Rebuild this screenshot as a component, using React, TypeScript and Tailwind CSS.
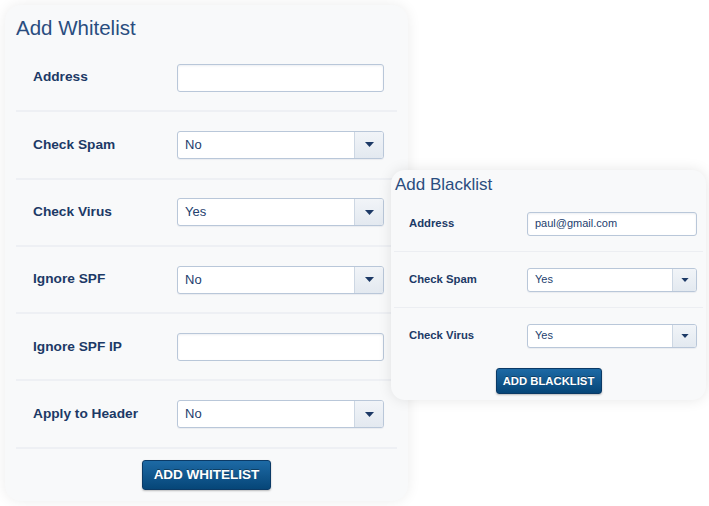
import React from 'react';

const font = { fontFamily: '"Liberation Sans", Arial, sans-serif' };

const Caret = ({ size }: { size: 'lg' | 'sm' }) => (
  <svg width={size === 'lg' ? 9 : 8} height={size === 'lg' ? 5 : 4} viewBox="0 0 9 5">
    <path d="M0 0h9L4.5 5z" fill="#1c3966" />
  </svg>
);

const TextBox = ({ value, size }: { value?: string; size: 'lg' | 'sm' }) => (
  <div
    className={
      size === 'lg'
        ? 'h-[28px] w-[207px] rounded-[3px] border border-[#b9c7d9] bg-white shadow-[inset_0_1px_2px_rgba(0,40,90,0.08)] flex items-center px-[8px] text-[13px] text-[#23406e]'
        : 'h-[24px] w-[170px] rounded-[3px] border border-[#b9c7d9] bg-white shadow-[inset_0_1px_2px_rgba(0,40,90,0.08)] flex items-center px-[7px] text-[11px] text-[#23406e]'
    }
  >
    {value}
  </div>
);

const SelectBox = ({ value, size }: { value: string; size: 'lg' | 'sm' }) => (
  <div
    className={
      size === 'lg'
        ? 'h-[28px] w-[207px] rounded-[3px] border border-[#b9c7d9] bg-white flex items-stretch overflow-hidden shadow-[0_1px_1px_rgba(0,40,90,0.06)]'
        : 'h-[24px] w-[170px] rounded-[3px] border border-[#b9c7d9] bg-white flex items-stretch overflow-hidden shadow-[0_1px_1px_rgba(0,40,90,0.06)]'
    }
  >
    <div
      className={
        size === 'lg'
          ? 'flex-1 flex items-center pl-[7px] text-[13px] text-[#23406e]'
          : 'flex-1 flex items-center pl-[7px] text-[11px] text-[#23406e]'
      }
    >
      {value}
    </div>
    <div
      className={
        size === 'lg'
          ? 'w-[29px] border-l border-[#cdd7e3] bg-gradient-to-b from-[#f1f4f8] to-[#e3e9f0] flex items-center justify-center'
          : 'w-[24px] border-l border-[#cdd7e3] bg-gradient-to-b from-[#f1f4f8] to-[#e3e9f0] flex items-center justify-center'
      }
    >
      <Caret size={size} />
    </div>
  </div>
);

type Field = { label: string; kind: 'text' | 'select'; value?: string };

const whitelist: Field[] = [
  { label: 'Address', kind: 'text' },
  { label: 'Check Spam', kind: 'select', value: 'No' },
  { label: 'Check Virus', kind: 'select', value: 'Yes' },
  { label: 'Ignore SPF', kind: 'select', value: 'No' },
  { label: 'Ignore SPF IP', kind: 'text' },
  { label: 'Apply to Header', kind: 'select', value: 'No' },
];

const blacklist: Field[] = [
  { label: 'Address', kind: 'text', value: 'paul@gmail.com' },
  { label: 'Check Spam', kind: 'select', value: 'Yes' },
  { label: 'Check Virus', kind: 'select', value: 'Yes' },
];

const buttonCls =
  'rounded-[3px] border border-[#0b3a66] bg-gradient-to-b from-[#1d6aa5] to-[#064678] text-white font-bold [text-shadow:0_-1px_0_rgba(0,0,0,0.35)] shadow-[0_1px_2px_rgba(0,0,0,0.25)]';

export default function App() {
  return (
    <div className="relative w-[709px] h-[506px] bg-white overflow-hidden" style={font}>
      {/* Whitelist card */}
      <div className="ml-[5px] mt-[5px] w-[403px] h-[496px] rounded-[16px] bg-[#f8f9fa] shadow-[0_0_14px_rgba(0,0,0,0.08)] px-[11px] flex flex-col">
        <div className="h-[40px] shrink-0 pt-[11px] text-[20.5px] leading-[24px] text-[#2a4d7f]">Add Whitelist</div>
        {whitelist.map((f) => (
          <div key={f.label} className="h-[67.3px] shrink-0 border-b-2 border-[#eef0f4] flex items-center">
            <div className="w-[161px] pl-[17px] text-[13.7px] font-bold text-[#1c3966]">{f.label}</div>
            {f.kind === 'text' ? <TextBox size="lg" value={f.value} /> : <SelectBox size="lg" value={f.value!} />}
          </div>
        ))}
        <div className="flex justify-center pt-[11px]">
          <button className={`${buttonCls} h-[30px] w-[129px] text-[13.5px]`}>ADD WHITELIST</button>
        </div>
      </div>

      {/* Blacklist card, overlapping */}
      <div className="absolute left-[391px] top-[170px] w-[315px] h-[230px] rounded-[14px] bg-[#f8f9fa] shadow-[0_0_14px_rgba(0,0,0,0.1)] px-[3px] flex flex-col">
        <div className="h-[26px] pt-[5px] pl-[1px] text-[17px] leading-[20px] text-[#2a4d7f]">Add Blacklist</div>
        {blacklist.map((f, i) => (
          <div
            key={f.label}
            className={
              i < blacklist.length - 1
                ? 'h-[56px] border-b border-[#eceef2] flex items-center'
                : 'h-[55px] flex items-center'
            }
          >
            <div className="w-[133px] pl-[15px] text-[11.3px] font-bold text-[#1c3966]">{f.label}</div>
            {f.kind === 'text' ? <TextBox size="sm" value={f.value} /> : <SelectBox size="sm" value={f.value!} />}
          </div>
        ))}
        <div className="flex justify-center pt-[5px]">
          <button className={`${buttonCls} h-[26px] w-[106px] text-[11.3px]`}>ADD BLACKLIST</button>
        </div>
      </div>
    </div>
  );
}
